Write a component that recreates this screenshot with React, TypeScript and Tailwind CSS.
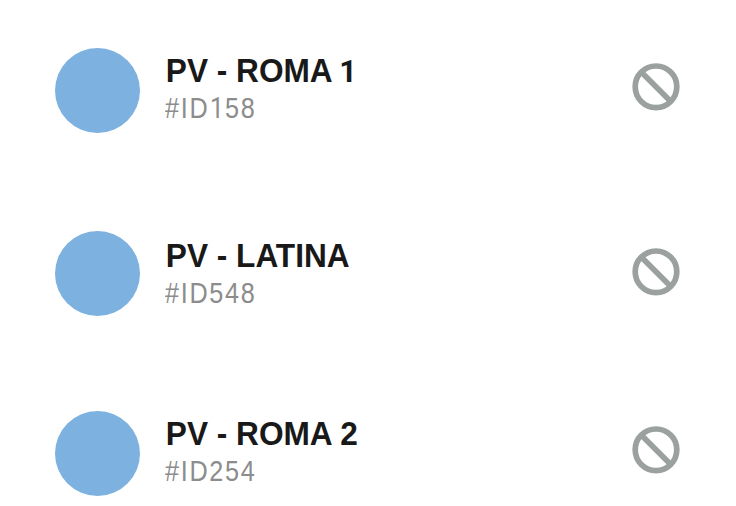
type Store = { name: string; lastName?: string; id: [string, string, string]; height: string; offset: string };

const stores: Store[] = [
  { name: 'PV - ROMA ', lastName: '1', id: ['#ID', '1', '58'], height: 'h-[183px]', offset: 'pt-0' },
  { name: 'PV - LATINA', id: ['#ID', '', '548'], height: 'h-[180px]', offset: 'pt-0.5' },
  { name: 'PV - ROMA 2', id: ['#ID', '', '254'], height: 'h-[95px]', offset: 'pt-0' },
];

function BlockedIcon() {
  return (
    <svg className="mt-[15px] size-12 shrink-0" viewBox="0 0 48 48" fill="none" stroke="#9ba19f" strokeWidth="5.7">
      <circle cx="24" cy="23.8" r="20.8" />
      <path d="M9.5 9.3l29 29" />
    </svg>
  );
}

export default function App() {
  return (
    <main className="h-[506px] w-[736px] overflow-hidden bg-white pt-12 font-['Liberation_Sans',Arial,sans-serif]">
      {stores.map((store) => (
        <div key={store.id.join('')} className={`flex items-start pl-[55px] pr-14 ${store.height}`}>
          <div className="size-[85px] shrink-0 rounded-full bg-[#7db1df]" />
          <div className={`flex flex-1 items-start ${store.offset}`}>
            <div className="ml-[25px] flex-1 pt-[5px]">
              <div className="h-9 origin-left translate-x-[0.8px] scale-x-[0.958] whitespace-pre text-[33px] font-bold leading-9 text-[#191919]">
                {store.name}
                {store.lastName && <span className="-ml-px font-['Roboto'] text-[32px]">{store.lastName}</span>}
              </div>
              <div className="h-9 origin-left scale-x-[0.84] whitespace-nowrap text-[30px] leading-[37px] tracking-[2px] text-[#8c8c8c]">
                {store.id[0]}
                {store.id[1] && <span className="inline-block w-[18.7px] pl-px font-['Roboto'] text-[29px] font-normal leading-none">{store.id[1]}</span>}
                {store.id[2]}
              </div>
            </div>
            <BlockedIcon />
          </div>
        </div>
      ))}
    </main>
  );
}
